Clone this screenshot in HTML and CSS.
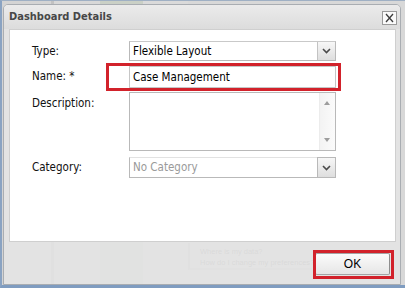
FILE: index.html
```html
<!DOCTYPE html>
<html lang="en">
    <head>
        <meta charset="utf-8">
        <title>Dashboard Details</title>
        <link rel="stylesheet" href="styles.css">
    </head>
    <body>
        <div class="desk">
            <div class="desk-col col-a"></div>
            <div class="desk-col col-b"></div>
            <div class="desk-col col-c"></div>
            <div class="desk-col col-d"></div>
            <div class="desk-col col-e"></div>
            <div class="desk-help">
                <div class="help-box">
                    <p>Where is my data?</p>
                    <p>How do I change my preferences?</p>
                </div>
            </div>
        </div>

        <div class="window">
            <div class="window-header">
                <span class="window-title">Dashboard Details</span>
                <span class="tool-close">
                    <svg viewBox="0 0 13 12" width="13" height="12"><path d="M3 2 L10 10 M10 2 L3 10" stroke="#3c3c3c" stroke-width="1.3" fill="none"/></svg>
                </span>
            </div>

            <div class="window-body">
                <div class="form-row row-type">
                    <label>Type:</label>
                    <div class="combo">
                        <span class="combo-text">Flexible Layout</span>
                        <span class="trigger"><svg viewBox="0 0 9 6" width="9" height="6"><path d="M1 1 L4.5 4.5 L8 1" stroke="#4a4a4a" stroke-width="1.6" fill="none"/></svg></span>
                    </div>
                </div>
                <div class="form-row row-name">
                    <label>Name: *</label>
                    <div class="field-wrap">
                        <div class="text-input">Case Management</div>
                        <span class="mark mark-name"></span>
                    </div>
                </div>
                <div class="form-row row-desc">
                    <label>Description:</label>
                    <div class="textarea">
                        <span class="scrollbar">
                            <span class="arrow-up"></span>
                            <span class="arrow-down"></span>
                        </span>
                    </div>
                </div>
                <div class="form-row row-cat">
                    <label>Category:</label>
                    <div class="combo combo-empty">
                        <span class="combo-text">No Category</span>
                        <span class="trigger"><svg viewBox="0 0 9 6" width="9" height="6"><path d="M1 1 L4.5 4.5 L8 1" stroke="#4a4a4a" stroke-width="1.6" fill="none"/></svg></span>
                    </div>
                </div>
            </div>

            <div class="window-footer">
                <div class="btn-wrap">
                    <button class="btn">OK</button>
                    <span class="mark mark-btn"></span>
                </div>
            </div>
        </div>
    </body>
</html>
```

FILE: styles.css
```css
html, body {height: 100%}
body {
    margin: 0;
    font-family: 'DejaVu Sans Condensed', 'DejaVu Sans', sans-serif;
    font-size: 11px;
    color: #000;
    overflow: hidden;
}

/* page behind the dialog, only visible through the frame */
.desk {
    display: flex;
    height: 288px;
    box-sizing: border-box;
    border-top: 1px solid #9fb0c4;
    border-left: 2px solid #8aa3c2;
    border-bottom: 3px solid #7f9cc0;
    background: #d6d6d6;
}
.desk-col {
    flex: none;
}
.col-a {width: 49px; background: #d4d4d4;}
.col-b {width: 3px; background: #c2c2c2;}
.col-c {width: 46px; background: #d8d8d8;}
.col-d {width: 43px; background: #cad0c6;}
.col-e {width: 45px; background: #dadada;}
.desk-help {
    flex: 1;
    background: #d8d8d8;
}
.help-box {
    width: 124px;
    margin-top: 242px;
    height: 27px;
    box-sizing: border-box;
    border-left: 2px solid #bdbdbd;
    border-bottom: 2px solid #c6c6c6;
    padding: 3px 0 0 10px;
    color: #8c8c8c;
    font-family: 'Liberation Sans', Arial, sans-serif;
    font-size: 7.5px;
    white-space: nowrap;
}
.help-box p {
    margin: 0;
    line-height: 11px;
}

/* dialog */
.window {
    position: absolute;
    left: 3px;
    top: 4px;
    width: 398px;
    height: 281px;
    box-sizing: border-box;
    display: flex;
    flex-direction: column;
    border: 1px solid #a9adb2;
    border-radius: 5px 5px 0 0;
    background: rgba(229, 229, 229, 0.87);
}
.window-header {
    height: 24px;
    flex: none;
    display: flex;
    align-items: center;
    justify-content: space-between;
    padding: 0 3px 0 5px;
    background: linear-gradient(#ebebeb, #dcdcdc);
    border-radius: 4px 4px 0 0;
}
.window-title {
    font-weight: bold;
    font-size: 11px;
    color: #474747;
    margin-top: -1px;
}
.tool-close {
    width: 15px;
    height: 14px;
    box-sizing: border-box;
    margin-top: 2px;
    display: flex;
    align-items: center;
    justify-content: center;
    background: #fafafa;
    border: 1px solid #9a9a9a;
}
.window-body {
    height: 213px;
    flex: none;
    margin: 0 4px 0 5px;
    box-sizing: border-box;
    padding: 11px 0 0 22px;
    background: #fff;
    border: 1px solid #cfcfcf;
}
.form-row {
    display: grid;
    grid-template-columns: 97px 207px;
    align-items: start;
}
.form-row label {
    line-height: 21px;
    font-size: 11.5px;
    color: #111;
}
.row-name {margin-top: 4px;}
.row-desc {margin-top: 4px;}
.row-cat {margin-top: 6px;}
.row-desc label {line-height: 22px;}

.combo {
    height: 20px;
    box-sizing: border-box;
    display: flex;
    border: 1px solid #b9b9b9;
    border-top-color: #c9c9c9;
    background: #fff;
}
.combo-text {
    flex: 1;
    padding-left: 3px;
    line-height: 18px;
    font-size: 11.5px;
}
.combo-empty {
    height: 21px;
    border-top-color: #e2e2e2;
    border-right: none;
}
.combo-empty .combo-text {
    color: #9a9a9a;
    line-height: 19px;
}
.trigger {
    width: 17px;
    flex: none;
    display: flex;
    align-items: center;
    justify-content: center;
    border-left: 1px solid #c3c3c3;
    background: linear-gradient(#f7f7f7, #dedede);
}
.combo-empty .trigger {
    border: 1px solid #b9b9b9;
    margin: -1px 0 -1px 0;
}

.field-wrap {
    position: relative;
}
.text-input {
    height: 22px;
    box-sizing: border-box;
    border: 1px solid #c6c6c6;
    padding-left: 3px;
    line-height: 20px;
    font-size: 11.5px;
    background: #fff;
}
.textarea {
    height: 59px;
    box-sizing: border-box;
    display: flex;
    justify-content: flex-end;
    border: 1px solid #b9b9b9;
    background: #fff;
}
.scrollbar {
    position: relative;
    width: 15px;
    border-left: 1px solid #ececec;
    background: linear-gradient(90deg, #f3f3f3, #fbfbfb);
}
.arrow-up, .arrow-down {
    position: absolute;
    left: 4px;
    width: 0;
    height: 0;
    border-left: 3.5px solid transparent;
    border-right: 3.5px solid transparent;
}
.arrow-up {
    top: 8px;
    border-bottom: 4px solid #9d9d9d;
}
.arrow-down {
    bottom: 8px;
    border-top: 4px solid #9d9d9d;
}

.window-footer {
    flex: 1;
    display: flex;
    justify-content: flex-end;
    align-items: flex-start;
    padding: 11px 10px 0 0;
}
.btn-wrap {
    position: relative;
}
.btn {
    display: block;
    width: 75px;
    height: 22px;
    padding: 0;
    border: 1px solid #a4a4a4;
    border-right-color: #8e8e8e;
    border-radius: 2px;
    background: linear-gradient(#fbfbfb, #e6e6e6);
    font-family: 'Liberation Sans', Arial, sans-serif;
    font-size: 12px;
    color: #000;
}

/* red highlight annotations */
.mark {
    position: absolute;
    border: 3px solid #d2222b;
    pointer-events: none;
}
.mark-name {
    left: -23px;
    right: -5px;
    top: -3px;
    bottom: -3px;
}
.mark-btn {
    left: -2px;
    right: -4px;
    top: -3px;
    bottom: -4px;
}
```
